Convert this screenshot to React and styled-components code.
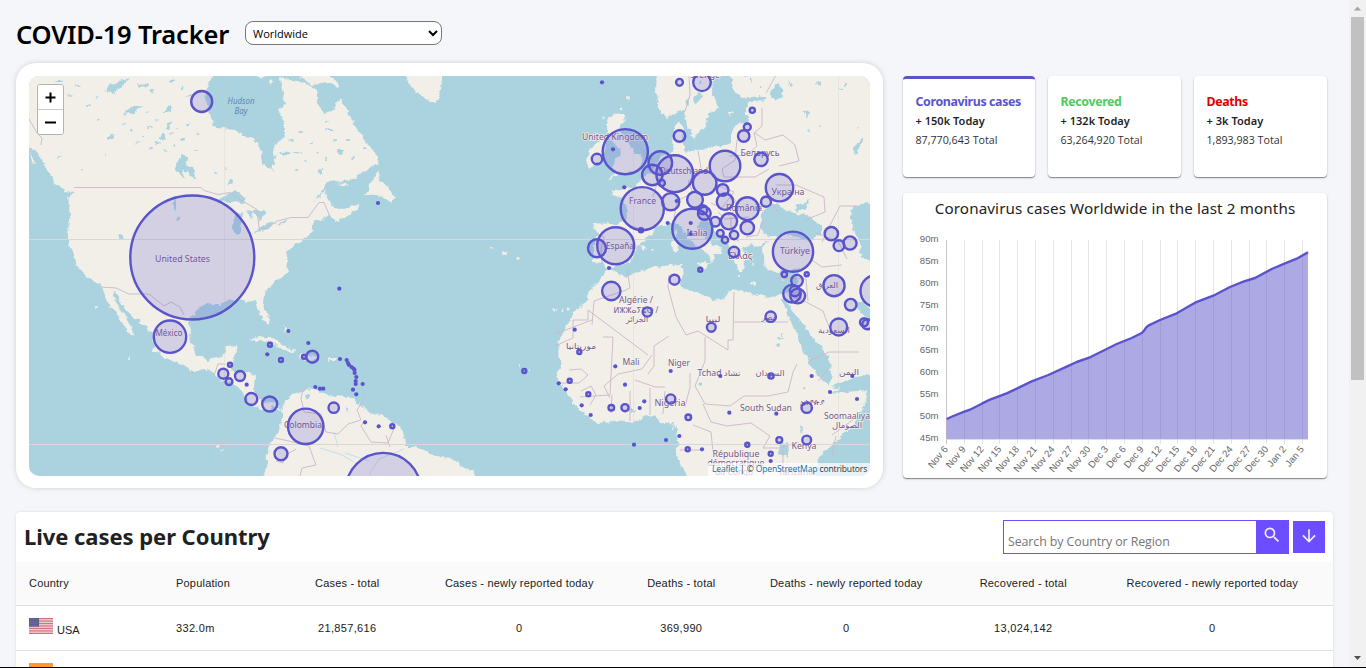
import React from "react";
import styled, { createGlobalStyle } from "styled-components";
import { MdSearch, MdArrowDownward } from "react-icons/md";

const UI = '"Noto Sans", "Open Sans", sans-serif';
const PURPLE = "#5a54cc";

const GlobalStyle = createGlobalStyle`
  * { box-sizing: border-box; }
  body { margin: 0; overflow: hidden; background: #f5f6fa; font-family: ${UI}; }
`;

const Window = styled.div`
  display: flex;
  width: 1366px;
  height: 668px;
  overflow: hidden;
  border-bottom: 1px solid #000;
`;
const Page = styled.main`
  width: 1349px;
  padding: 0 16px;
  overflow: hidden;
`;
const Header = styled.header`
  display: flex;
  align-items: center;
  height: 63px;
  padding-top: 3px;
`;
const Title = styled.h1`
  margin: 0;
  width: 229px;
  font: 600 25.5px/34px ${UI};
  letter-spacing: -0.2px;
  white-space: nowrap;
  color: #000;
  padding-top: 2px;
`;
const CountrySelect = styled.select`
  width: 197px;
  height: 24px;
  border: 1px solid #767676;
  border-radius: 8px;
  background: #fff;
  color: #000;
  font: 11px "Open Sans", ${UI};
  padding: 0 0 0 3px;
`;
const Dashboard = styled.section`
  display: flex;
  align-items: flex-start;
  height: 449px;
`;
const MapCard = styled.div`
  width: 867px;
  height: 425px;
  padding: 13px 13px 12px;
  border-radius: 20px;
  background: #fff;
  box-shadow: 0 0 6px -1px rgba(0, 0, 0, 0.22);
`;
const MapView = styled.div`
  position: relative;
  width: 841px;
  height: 400px;
  overflow: hidden;
  border-radius: 10px;
  background: #aad3df;
`;
const ZoomControl = styled.div`
  position: absolute;
  left: 8px;
  top: 8px;
  width: 27px;
  border: 1px solid #b5b3af;
  border-radius: 3px;
  background: #fff;
  overflow: hidden;
`;
const ZoomButton = styled.button`
  display: flex;
  align-items: center;
  justify-content: center;
  width: 25px;
  height: ${(p) => (p.$second ? 25 : 24)}px;
  padding: 0;
  border: 0;
  border-top: ${(p) => (p.$second ? "1px solid #ccc" : "0")};
  background: #fff;
`;
const Attribution = styled.div`
  position: absolute;
  right: 0;
  bottom: 0;
  width: 162px;
  height: 13px;
  padding-left: 4px;
  background: rgba(255, 255, 255, 0.7);
  color: #333;
  font: 8.55px/13px "Open Sans", ${UI};
  letter-spacing: -0.14px;
  white-space: nowrap;
  a { color: #0078a8; }
`;
const Side = styled.aside`
  width: 424px;
  margin: 13px 0 0 20px;
`;
const Stats = styled.div`
  display: flex;
  justify-content: space-between;
  height: 101px;
`;
const shadow = `box-shadow: 0 1px 1px rgba(0,0,0,.4), 0 1px 3px rgba(0,0,0,.12);`;
const StatCard = styled.div`
  width: ${(p) => (p.$active ? 132 : 133)}px;
  height: 101px;
  padding: 14px 0 0 12.5px;
  border-top: 3px solid ${(p) => (p.$active ? PURPLE : "#fff")};
  border-radius: 4px;
  background: #fff;
  white-space: nowrap;
  ${shadow}
`;
const StatTitle = styled.div`
  font: 700 12.4px/18px ${UI};
  letter-spacing: -0.37px;
  color: ${(p) => p.$color};
`;
const StatToday = styled.div`
  margin-top: 1px;
  font: 600 11px/18px ${UI};
  letter-spacing: 0.03px;
  color: #1f1f1f;
`;
const StatTotal = styled.div`
  margin-top: 1px;
  font: 400 10.7px/18px "Open Sans", ${UI};
  color: #333;
`;
const GraphCard = styled.div`
  width: 424px;
  height: 285px;
  margin-top: 16px;
  border-radius: 4px;
  background: #fff;
  ${shadow}
`;
const GraphTitle = styled.h3`
  margin: 0;
  height: 32px;
  text-align: center;
  font: 400 15.2px/30px ${UI};
  letter-spacing: 0.12px;
  color: #222;
  white-space: nowrap;
`;
const TablePanel = styled.section`
  height: 170px;
  border-radius: 4px;
  background: #fff;
  box-shadow: 0 0 3px rgba(0, 0, 0, 0.12);
`;
const TableTop = styled.div`
  display: flex;
  justify-content: space-between;
  height: 50px;
  padding: 8px 8px 0;
`;
const TableTitle = styled.h2`
  margin: 0;
  font: 700 22px/32px ${UI};
  letter-spacing: -0.05px;
  white-space: nowrap;
  color: #212121;
`;
const Search = styled.form`
  display: flex;
  align-items: flex-start;
`;
const SearchInput = styled.input`
  width: 254px;
  height: 34px;
  border: 1px solid #6c4dff;
  padding: 9px 4px 0;
  font: 12.4px "Open Sans", ${UI};
  letter-spacing: -0.09px;
  outline: 0;
  &::placeholder { color: #757575; opacity: 1; }
`;
const SearchButton = styled.button`
  display: flex;
  justify-content: center;
  width: ${(p) => p.$size}px;
  height: ${(p) => p.$height}px;
  margin: ${(p) => p.$margin};
  padding: 5px ${(p) => (p.$size === 33 ? 2 : 0)}px 0 0;
  border: 0;
  background: #6c4dff;
  color: #f1edff;
  svg { width: 20px; height: 20px; }
`;
const Row = styled.div`
  display: grid;
  grid-template-columns: 147px 118px 132px 212px 112px 218px 136px 242px;
  align-items: center;
  height: ${(p) => (p.$head ? 44 : 45)}px;
  padding-bottom: ${(p) => (p.$head ? 2 : 0)}px;
  border-bottom: 1px solid #e0e0e0;
  background: ${(p) => (p.$head ? "#fafafa" : "#fff")};
`;
const Cell = styled.div`
  padding-left: ${(p) => (p.$left ? 13 : 0.5)}px;
  text-align: ${(p) => (p.$left ? "left" : "center")};
  font: 11px/16px "Liberation Sans", Arial, sans-serif;
  letter-spacing: ${(p) => (p.$head ? 0.2 : 0.33)}px;
  color: #212121;
  white-space: nowrap;
`;
const CountryCell = styled(Cell)`
  display: flex;
  align-items: center;
  gap: 4px;
  letter-spacing: 0;
  span { padding-top: 4px; }
  svg { margin-bottom: 4px; }
`;
const Scrollbar = styled.div`
  display: flex;
  flex-direction: column;
  align-items: center;
  justify-content: space-between;
  width: 17px;
  background: #f1f1f1;
`;
const Thumb = styled.div`
  width: 13px;
  height: 363px;
  margin-bottom: auto;
  background: #c1c1c1;
`;
const Arrow = styled.svg`
  display: block;
  width: 17px;
  height: 17px;
`;

const LAND = [
  "M20 66L20 141L29 147L37 153L42 160L50 173L62 184L74 192L68 198L70 213L68 232L68 240L72 253L78 268L87 277L95 282L102 287L107 302L115 312L120 320L125 327L127 333L135 337L133 332L128 322L123 313L118 305L112 295L115 292L120 300L128 312L140 322L150 332L155 343L153 350L163 357L177 363L195 371L205 369L215 375L220 380L232 383L238 387L245 395L247 403L257 407L267 411L272 405L282 412L282 418L278 433L270 443L266 457L268 460L265 470L267 486L478 486L475 476L473 470L462 467L453 458L440 457L433 455L423 450L415 447L405 447L407 443L400 427L387 418L370 413L358 403L350 397L333 396L320 392L310 387L303 392L292 395L285 403L281 410L273 402L263 403L256 397L254 387L255 375L247 372L233 372L230 367L235 357L238 345L227 346L222 357L207 360L197 355L191 343L189 323L192 317L200 307L208 303L220 305L227 300L237 299L247 302L255 300L258 312L267 326L269 318L263 303L264 292L273 283L287 273L288 260L286 253L295 245L303 240L313 230L313 223L330 215L331 217L337 222L358 208L360 204L344 209L331 206L324 191L314 201L328 182L350 180L363 173L378 163L379 157L370 147L360 133L353 123L340 97L333 110L325 115L317 103L317 91L307 84L280 78L282 90L285 103L278 110L285 123L285 137L273 145L275 160L272 171L262 163L259 143L233 130L213 126L209 110L205 98L209 83L217 66Z",
  "M405 76L412 88L427 100L437 102L441 88L443 70L403 70Z",
  "M380 169L373 180L365 195L383 197L392 203L394 197L387 185L379 181Z",
  "M51 175L60 178L73 191L69 193L56 184Z M29 151L37 165L32 161Z",
  "M253 75L260 79L265 75Z M269 79L273 82L270 86Z M292 74L302 78L312 85L328 83L340 89L334 77L320 72Z M336 182L349 185L345 187Z",
  "M249 341L258 336L271 338L287 347L297 351L286 352L275 344L263 340Z M300 354L310 355L319 359L310 361L299 358Z M328 359h7v2h-7Z M277 359l6 1l-3 2Z M277 319l5-1m4 8l4 8m6 0l3 4",
  "M607 269L617 265L630 263L637 247L645 240L653 232L657 227L668 224L676 223L681 227L688 238L698 247L708 255L710 264L716 258L713 253L722 253L722 249L712 244L702 234L698 226L703 217L709 222L718 234L729 244L730 255L735 263L740 271L746 268L743 260L749 258L742 248L750 245L757 246L765 243L762 250L765 268L775 272L790 270L800 268L797 282L793 292L785 293L767 297L747 292L728 290L725 298L713 300L695 291L682 287L680 280L684 272L681 264L653 267L637 272L627 277L608 270L600 280L590 290L588 300L573 312L568 323L558 342L561 367L556 377L563 388L573 403L587 417L600 423L617 420L633 422L647 416L655 415L663 424L673 423L677 430L678 443L675 452L680 464L687 476L690 486L814 486L814 476L818 460L827 450L852 427L865 403L867 390L847 392L830 393L880 374L880 66L731 66L732 80L733 90L742 98L760 96L766 99L748 103L745 110L748 118L747 125L740 122L732 130L731 143L715 148L698 150L686 152L682 143L684 132L680 121L674 128L673 152L663 154L655 165L645 178L637 183L635 189L627 187L623 191L612 189L613 195L622 198L627 208L626 223L612 224L594 223L592 228L597 233L594 247L593 262L602 263Z",
  "M657 70L656 93L658 110L667 118L677 112L685 110L687 127L695 135L705 127L708 115L718 108L712 95L713 70Z",
  "M610 115L623 114L625 121L618 128L626 137L633 149L642 158L640 170L628 173L620 173L608 180L617 171L613 168L615 160L622 154L615 142L607 135L607 124Z",
  "M590 150L602 138L606 145L603 160L590 168L586 164Z",
  "M672 242l5-1l1 9l-5 1Z M674 231l3-1l0 7l-2 0Z M695 263l13-1l-2 8Z M747 283h10l-2 2Z M779 276l8-1l-5 5Z M600 98l4-6M645 250l5-2M691 135l6-1l-3 5Z M719 118l5-5M728 112h5l-3 4",
];

const WATER = [
  "M763 207L775 203L785 210L795 213L810 217L822 227L822 233L810 240L787 234L767 237L760 227Z",
  "M794 206L810 200L806 208L797 211Z M763 242l6-1l-2 3Z",
  "M850 210L860 203L880 202L880 265L862 257L860 243L852 227Z",
  "M785 297L792 311L798 317L812 337L827 355L832 373L830 385L817 377L807 357L803 350L793 327L786 310L782 299Z",
  "M832 386L857 377L880 372L880 389L847 391Z",
  "M852 298L860 312L872 325L880 320L863 303Z",
  "M216 201L228 194L237 190L247 199L243 203L230 202Z",
  "M235 214L242 212L240 230L236 235L233 228Z M247 212L257 209L266 211L260 222L258 216L252 212L251 219Z M254 233L268 229L276 222L266 224Z M274 225L287 219L284 224Z",
  "M175 171L182 154L187 158L186 165L193 166L195 178L190 176L183 169L186 179Z",
  "M105 91L115 83L129 79L121 88L113 93Z M122 114L133 107L145 106L133 113Z M162 114L170 104L170 111Z M165 129l7-8l-2 9Z",
  "M772 88L780 83L782 96L776 101L771 95Z M788 79l5 6l-2 2Z M804 109l6 4l-2 5Z M693 99l7-8l2 5l-6 9Z M684 103l6-7l-2 10Z",
  "M778 444L789 442L788 457L779 453Z M800 426l3 2l-1 7Z M779 466l3 10l-2 1Z M853 150l7-11l4-1l-9 16Z",
];

const BORDERS = [
  "M74 187.5H201l3 3l14 4l12-2l10 7l17 10l2 18l8 1l9-7l15-4h17l11-15h5l6 14",
  "M29 119l8 14l5 5l-1 7", "M101 287l15 1l13 6h20l10 8l5 4l7-4l9 5l4 8",
  "M215 373l3-9h7m-2 17l8 3m5-10l7-3m11 20l10 9",
  "M303 390l-2 8l3 14l17 2l3 12l2 6l12 2l10-10l13-4l-4-10l8-12m0 22l-4 6l10 16l17 1l7-17m-9 9l4 12",
  "M275 438l14 3l20 5l7 19l-14 3l-2 8m-24-15l7 2l3-8l10-6",
  "M669 275l-1 12l8 30l10 18l12-4l30 19l0-10l5 0l1-48m0 30h54m-119 14l-15 10v20l-6 8m0-19l-60-45v10h-15v18l-18 8m37-26l-37 14m48 3h10l-3 58l-30 2",
  "M610 398l-6-12l14-12l24-5l10-14m-17 25l20 7h10m-35 34v-30m20 24l0-27m13 26l2-23m25-18l0 14l-5 20",
  "M705 337l0 24l-10 25l10 18l25 2l14-10h24l20-4l5-20l4-8",
  "M703 404l8 18l16 4l24-3l19 13l-7 12m-70-23l18 7l2 20m-33-2h20m63-2l16 0l20-6m-16 7v24m53-37l-4 19m0-20l22-16m-36-38l12-14",
  "M569 370l12-1l7 6l-9 8l-20 0m22 8l10-5l5 9l-6 10m22-10l-1 18",
  "M685 111l5-16l-1-20m87 0l-10 18m-4 15v18l-8 7l3 13l-10 9l-18 1m26-23l10 7l18-5l12 10l4 16l-20 5m-42-26l-2 20l-13 9l2 8l31 0l14-8m-39 24l10 14l-12 9m48-31l20 0l28 12l1 15l-20 8",
  "M698 151l4 22l-14 8l5 12l-16 8l-3 17m42-33l18 7l-12 16l-11-5m18-6l10 10l17 2l10-14l12 17m-60 0l7 7l24-2m-18 0v20l8 4m24-21l-5 15l-12 2m-117-12l17 6m-14-90l20 17l-3 12m9 10l-5 17",
  "M595 234l9 3l-3 12l1 15m214-31l22 8l9 18m-35 1l10 7l20-2m-67 13l31 1l2 22m-21-7l19 8l17 9l6 16m-20 34l20-9l30 0m-37-110l6-13l12-23h18",
  "M627 268l3 20l-4 2l-32 11l-2 24",
];

const LAKES = [
  [60,82,5,1],[78,86,3,1],[143,85,5,1.5],[152,91,2,1],[172,80,3,1.5],[183,88,1.5,1],[88,106,3,1],[99,120,2,1],[111,137,3,2],[131,130,2,1],[150,128,3,1],[158,143,3,1],[163,137,2,3],[175,145,1,1.6],[183,139,2,2],[196,150,1.5,1],[199,134,1.5,1],[190,96,3,1],[151,149,2,1],[106,155,1,1],[231,182,2,3],[285,153,5,1.2],[297,153,4,1],[311,143,2,1],[340,151,3,3],[347,140,2,1],[321,171,2,2],[330,130,4,1],[327,121,2,1],[366,148,2,1],[306,161,1,1],[308,397,2,3],[121,237,2,3],[59,157,2,1],[81,170,1,1],[175,204,1,7],[179,218,1,3],[820,126,1.5,1],[808,130,1,1],[818,83,3,1.5],[846,85,1,3],[840,90,2,1],[857,127,1,.7],[745,76,2,1],[752,80,1,2],[760,88,2,1],[701,82,1,3],[781,339,4,1],[778,345,2,2],[783,334,1,2],[804,388,1.3,1.3],[700,384,1.5,1.5],[797,280,1,1],[632,411,3,1],[347,410,1,2],[633,457,1,1],
  [143,136,1.5,1],[137,143,2,.8],[168,125,1,2],[172,133,2,.8],[178,128,1.5,.8],[166,151,1,1.5],[188,125,2,1],[155,120,2,.8],[148,112,1.5,.7],[124,124,1.5,.7],[96,97,2,.8],[70,95,2,.7],[50,110,2,.7],[292,140,3,1],[318,152,2,1],[326,160,1.5,1],[352,158,2,1],[335,141,2,1],[300,132,2,1],[297,170,2,1],[217,173,1.5,1],[226,168,1.5,.8],
];

const ISLES = [[491,249,1],[505,253,2],[518,259,2],[553,310,1],[556,311,1],[563,311,1.4],[569,309,1.5],[520,366,1],[529,370,1],[217,446,2],[223,450,1],[635,251,1.3],[643,248,2.5],[652,250,1],[603,118,1.6],[621,108,1.2],[628,98,2],[97,307,1],[129,358,1],[282,327,1],[286,330,1.5],[673,428,1.2],[740,276,1],[753,265,1]];

const CIRCLES = [
  [192.3,257.5,62],[201.7,101.5,10.5],[170,336.7,16.2],[270,344.7,2],[281,360,2],[304,356.7,2],[312.3,356.7,6],[230,364.7,2],[223.3,373.7,5],[229,381.7,3.4],[240,376,5],[251.3,399,6],[269.7,404,7.5],[333.7,407.7,5.2],[305.7,426.3,17.7],[281,453.7,6.5],[392.3,426.3,2],[383.3,490.5,37.6],
  [625.3,151.7,22.6],[597,159,5.2],[660.3,163,11.8],[652.3,175,10.2],[674.7,173.7,18.4],[661.7,183,3.2],[642.3,208.7,21.6],[670.7,201.7,8.6],[641,230.3,2],[615.7,245.7,18.5],[597,248.3,9],[674.5,279.7,5],
  [679.5,82.3,3.4],[702,82.3,8.8],[752.3,110.3,2.6],[747.3,127,3.5],[743.7,136,5.7],[679.5,136,5.8],[725,166,15.3],[761,159.3,6.7],[779.5,187.7,13.7],[704.7,183,11.8],[722.7,190,5.8],[725,201.7,8.2],[695,199.7,7.9],[702.7,209.7,4.6],[704.3,213.3,6.4],[692.3,228.7,20],[715.3,221.7,4.8],[729,221.3,8.1],[720.3,233.3,3.4],[725,240,3.2],[734,235,4.2],[747.3,227.7,6.7],[747.3,208.7,11.4],[766,201.7,5],[734,252,5.2],[793,251.7,20.1],[831.3,233.7,6.7],[839,245.7,5.4],[850,243,6.6],[700.3,269.7,2],[784.3,274.3,2.7],[806.7,274.3,2],
  [797,280.7,5.8],[792,293.7,8.8],[795,291,5.2],[797.7,296,7.4],[834,285.7,10.6],[850.7,304.7,5.8],[838.7,327,8.5],[864,322.3,4],[867.3,324.3,5],[876.5,291,16],[770.7,316.7,5.2],[711.3,327.3,4.4],[771,376,2.6],[806.7,407.7,5.2],[688.3,417.3,2.8],[670.7,399,4.6],[687.7,449.3,2],[747.3,444.7,2],[779.3,440,2.9],[806.7,440,4.4],[770.7,453.7,2],
  [611.3,291,9.2],[647.3,312,4.6],[579.3,352,2],[524.3,371,2],[569.7,380.7,2],[588.3,394.3,2],[625,407.7,3.6],[611.3,407.7,2.8],
];
const DOTS = [
  [378,203],[339.3,288.7],[288.3,331],[308.3,343],[267.3,354.3],[340,359],[346.7,360],[348,363],[349,365],[351.5,367],[353.5,368.5],[354.5,370],[354.7,373],[356.3,377],[355.7,381],[355.7,384],[362.7,384],[353,389.7],[356.3,394.3],[315.3,387],[320,388.7],[323.3,388.7],[246.7,384.7],[365,422.3],[378.7,426.3],
  [602,82.3],[613,149.3],[624.3,187.3],[667.7,223],[609,268],[676.7,201],[690.7,223],[690.7,234],
  [720.3,376],[811.7,376],[852.3,376],[830,392],[857,399],[776.3,413.7],[729.3,412.7],[679.3,436],[702,449.3],[770.7,461],[670.7,371],
  [574.7,329.7],[615.3,366.3],[558.7,383.3],[565.7,389.3],[625,384.7],[644.3,401.3],[639.7,408],[581.7,405.3],[590.7,415],[634,444.7],[666,440],
];
const LABELS = [
  [182.5,261.5,"United States",55],[169,335.5,"México",27],[303,427.5,"Colombia",38],[615,140,"United Kingdom",66],[642.5,204,"France",27],[620,248.5,"España",28],[684,174,"Deutschland",48],[760,156,"Беларусь",39],[788,194.5,"Україна",33],[744,211,"România",36],[697,236,"Italia",21],[795,254,"Türkiye",30],[740,258.5,"Ελλάς",24],[705,78,"Sverige",30],[636,302.5,"Algérie /",34],[636,312.5,"ⵍⵣⵣⴰⵢⴻⵔ /",45],[637,322,"الجزائر",22],[581,349,"موريتانيا",30],[631,365,"Mali",17],[679,365.5,"Niger",22],[670,406,"Nigeria",31],[713,322,"ليبيا",15],[769,320,"مصر",15],[719,375.5,"Tchad تشاد",43],[770,376,"السودان",29],[827,288,"العراق",22],[834,333,"السعودية",32],[849,375,"اليمن",20],[766,411,"South Sudan",52],[812,405,"ኢትዮጵያ",25],[847,418.5,"Soomaaliya",46],[847,428,"الصومال",30],[804,448.5,"Kenya",25],[736,457,"République",47],[736,466,"démocratique",57],[734,475,"du Congo",38],[797,475,"Tanzania",38],
];

function WorldMap() {
  return (
    <svg width="841" height="400" viewBox="29 76 841 400" display="block">
      <defs>
        <filter id="coast" x="0" y="60" width="900" height="440" filterUnits="userSpaceOnUse">
          <feTurbulence type="fractalNoise" baseFrequency="0.16" numOctaves="3" seed="7" result="n" />
          <feDisplacementMap in="SourceGraphic" in2="n" scale="6" xChannelSelector="R" yChannelSelector="G" />
        </filter>
      </defs>
      <g filter="url(#coast)">
        {LAND.map((d, i) => <path key={i} d={d} fill="#f2efe9" />)}
        {WATER.map((d, i) => <path key={i} d={d} fill="#aad3df" />)}
        {LAKES.map(([x, y, a, b], i) => <ellipse key={i} cx={x} cy={y} rx={a} ry={b} fill="#aad3df" />)}
        {ISLES.map(([x, y, r], i) => <circle key={i} cx={x} cy={y} r={r} fill="#f2efe9" />)}
      </g>
      <path d="M320 448l20 6l14 8m-20-30l4 15m66 2l-25 10l-10 16m-24-22l24 8" fill="none" stroke="#b9dbe3" strokeWidth=".8" />
      {BORDERS.map((d, i) => <path key={i} d={d} fill="none" stroke="#cdb5c8" strokeWidth=".9" strokeLinejoin="round" />)}
      <path d="M29 239.5H870M29 444.5H870" stroke="#d8d9d6" strokeWidth="1" />
      <path d="M224.5 76V476M633.5 76V476M838.5 76V476" stroke="#c9cfc9" strokeWidth="1" opacity=".28" />
      <g fontFamily='"Noto Sans", "DejaVu Sans", sans-serif' fontSize="8.3" textAnchor="middle" fill="#755a88" stroke="#f7f3f2" strokeWidth="1.6" strokeOpacity=".75" paintOrder="stroke">
        {LABELS.map(([x, y, t, w]) => <text key={t} x={x} y={y} textLength={w} lengthAdjust="spacingAndGlyphs">{t}</text>)}
      </g>
      <g fontFamily='"Noto Sans", sans-serif' fontStyle="italic" fontSize="8" textAnchor="middle" fill="#6186b4">
        <text x="241" y="104" textLength="27" lengthAdjust="spacingAndGlyphs">Hudson</text>
        <text x="241" y="113.500" textLength="13" lengthAdjust="spacingAndGlyphs">Bay</text>
      </g>
      <g fill="#5a54cc" fillOpacity=".2" stroke="#5a54cc" strokeWidth="2.400">
        {CIRCLES.map(([x, y, r], i) => <circle key={i} cx={x} cy={y} r={r} />)}
      </g>
      <g fill="#5a54cc">
        {DOTS.map(([x, y], i) => <circle key={i} cx={x} cy={y} r="2.1" />)}
      </g>
    </svg>
  );
}

const SERIES = [[170,537],[190,528],[223,515],[240,509],[275,491],[300,479],[350,460],[382,445],[425,424],[475,405],[530,380],[560,366],[600,352],[650,327],[680,312],[725,294],[755,279],[763,271],[768,263],[775,257],[810,240],[860,220],[915,188],[970,167],[1020,141],[1060,125],[1095,114],[1145,87],[1185,70],[1220,56],[1254,37]]
  .map(([x, y]) => `${(x / 3 - 13).toFixed(1)} ${(y / 3 + 15).toFixed(1)}`);
const DAYS = ["Nov 6","Nov 9","Nov 12","Nov 15","Nov 18","Nov 21","Nov 24","Nov 27","Nov 30","Dec 3","Dec 6","Dec 9","Dec 12","Dec 15","Dec 18","Dec 21","Dec 24","Dec 27","Dec 30","Jan 2","Jan 5"];
const LEVELS = [90, 85, 80, 75, 70, 65, 60, 55, 50, 45];

function CasesChart() {
  return (
    <svg width="424" height="253" viewBox="0 0 424 253" display="block">
      {DAYS.map((d, i) => (
        <path key={d} d={`M${Math.round(43 + i * 17.8) + 0.5} 15V219`} stroke={i ? "#e5e5e5" : "#c4c4c4"} />
      ))}
      <path d="M43 214.500H405" stroke="#ddd" />
      <path d={`M${SERIES.join("L")}L405 214L43.700 214Z`} fill="#5a54cc" fillOpacity=".5" />
      <path d={`M${SERIES.join("L")}`} fill="none" stroke="#5a54cc" strokeWidth="2.400" strokeLinejoin="round" />
      <g fontFamily='"Liberation Sans", Arial, sans-serif' fontSize="9.600" fill="#666" textAnchor="end">
        {LEVELS.map((v, i) => <text key={v} x="35.500" y={17 + i * 22.15}>{v}m</text>)}
        {DAYS.map((d, i) => <text key={d} transform={`translate(${45.5 + i * 17.8} 224.500) rotate(-50)`}>{d}</text>)}
      </g>
    </svg>
  );
}

function UsaFlag() {
  return (
    <svg width="24" height="16" viewBox="0 0 24 16">
      <path fill="#f0d5da" d="M0 0h24v16H0z" />
      {[0, 1, 2, 3, 4, 5, 6].map((i) => <path key={i} fill="#d4717f" d={`M0 ${i * 2.46}h24v1.230H0z`} />)}
      <path fill="#5b5b8c" d="M0 0h10v8.600H0z" />
      <path d="M1 1.500h8M1 3.500h8M1 5.500h8M1 7.300h8" stroke="#8787ac" strokeWidth=".7" strokeDasharray=".8 .8" />
    </svg>
  );
}

const STATS = [
  ["Coronavirus cases", "150k", "87,770,643", PURPLE],
  ["Recovered", "132k", "63,264,920", "#54c763"],
  ["Deaths", "3k", "1,893,983", "#e00000"],
];
const HEADS = ["Country", "Population", "Cases - total", "Cases - newly reported today", "Deaths - total", "Deaths - newly reported today", "Recovered - total", "Recovered - newly reported today"];
const USA = ["332.0m", "21,857,616", "0", "369,990", "0", "13,024,142", "0"];

export default function App() {
  return (
    <Window>
      <GlobalStyle />
      <Page>
        <Header>
          <Title>COVID-19 Tracker</Title>
          <CountrySelect defaultValue="Worldwide"><option>Worldwide</option></CountrySelect>
        </Header>
        <Dashboard>
          <MapCard>
            <MapView>
              <WorldMap />
              <ZoomControl>
                <ZoomButton aria-label="Zoom in">
                  <svg width="11" height="11"><path d="M5.500 .5v10M.5 5.500h10" stroke="#000" strokeWidth="2" /></svg>
                </ZoomButton>
                <ZoomButton $second aria-label="Zoom out">
                  <svg width="11" height="11"><path d="M0 5.500h11" stroke="#000" strokeWidth="2" /></svg>
                </ZoomButton>
              </ZoomControl>
              <Attribution><a>Leaflet</a> | © <a>OpenStreetMap</a> contributors</Attribution>
            </MapView>
          </MapCard>
          <Side>
            <Stats>
              {STATS.map(([name, today, total, color], i) => (
                <StatCard key={name} $active={i === 0}>
                  <StatTitle $color={color}>{name}</StatTitle>
                  <StatToday>+ {today} Today</StatToday>
                  <StatTotal>{total} Total</StatTotal>
                </StatCard>
              ))}
            </Stats>
            <GraphCard>
              <GraphTitle>Coronavirus cases Worldwide in the last 2 months</GraphTitle>
              <CasesChart />
            </GraphCard>
          </Side>
        </Dashboard>
        <TablePanel>
          <TableTop>
            <TableTitle>Live cases per Country</TableTitle>
            <Search>
              <SearchInput placeholder="Search by Country or Region" />
              <SearchButton type="button" $size={33} $height={34} $margin="0 4px 0 -1px"><MdSearch /></SearchButton>
              <SearchButton type="button" $size={32} $height={32} $margin="1px 0 0"><MdArrowDownward /></SearchButton>
            </Search>
          </TableTop>
          <Row $head>
            {HEADS.map((h, i) => <Cell key={h} $head $left={i < 2}>{h}</Cell>)}
          </Row>
          <Row>
            <CountryCell $left><UsaFlag /><span>USA</span></CountryCell>
            {USA.map((v, i) => <Cell key={i} $left={i === 0}>{v}</Cell>)}
          </Row>
          <Row>
            <CountryCell $left>
              <svg width="24" height="16"><path d="M0 0h24v5.300H0z" fill="#ff9933" /><path d="M0 10.700h24V16H0z" fill="#138808" /></svg>
              <span>India</span>
            </CountryCell>
          </Row>
        </TablePanel>
      </Page>
      <Scrollbar>
        <Arrow><path d="M5 10.500l3.500-4l3.500 4z" fill="#a3a3a3" /></Arrow>
        <Thumb />
        <Arrow><path d="M5 6l3.500 4L12 6z" fill="#505050" /></Arrow>
      </Scrollbar>
    </Window>
  );
}
